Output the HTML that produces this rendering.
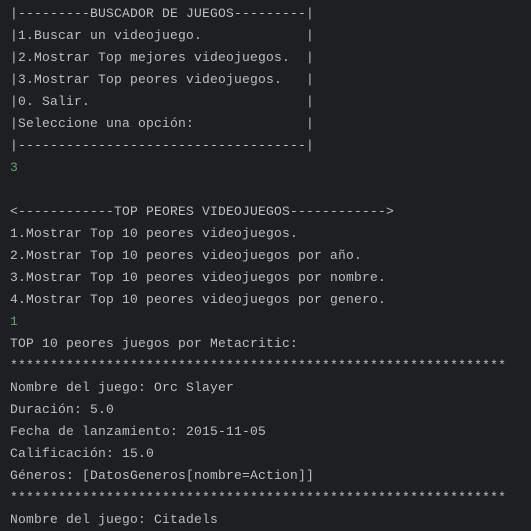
<!DOCTYPE html>
<html><head><meta charset="utf-8"><style>
html,body{margin:0;padding:0;background:#1e1f22;width:531px;height:529px;overflow:hidden}
pre{margin:0;position:absolute;left:10px;top:3px;font-family:"Liberation Mono",monospace;font-size:13px;letter-spacing:0.2px;line-height:22px;color:#bcbec4}
.g{color:#5fa86a}
</style></head><body><pre>|---------BUSCADOR DE JUEGOS---------|
|1.Buscar un videojuego.             |
|2.Mostrar Top mejores videojuegos.  |
|3.Mostrar Top peores videojuegos.   |
|0. Salir.                           |
|Seleccione una opción:              |
|------------------------------------|
<span class="g">3</span>

&lt;------------TOP PEORES VIDEOJUEGOS------------&gt;
1.Mostrar Top 10 peores videojuegos.
2.Mostrar Top 10 peores videojuegos por año.
3.Mostrar Top 10 peores videojuegos por nombre.
4.Mostrar Top 10 peores videojuegos por genero.
<span class="g">1</span>
TOP 10 peores juegos por Metacritic:
**************************************************************
Nombre del juego: Orc Slayer
Duración: 5.0
Fecha de lanzamiento: 2015-11-05
Calificación: 15.0
Géneros: [DatosGeneros[nombre=Action]]
**************************************************************
Nombre del juego: Citadels</pre></body></html>
